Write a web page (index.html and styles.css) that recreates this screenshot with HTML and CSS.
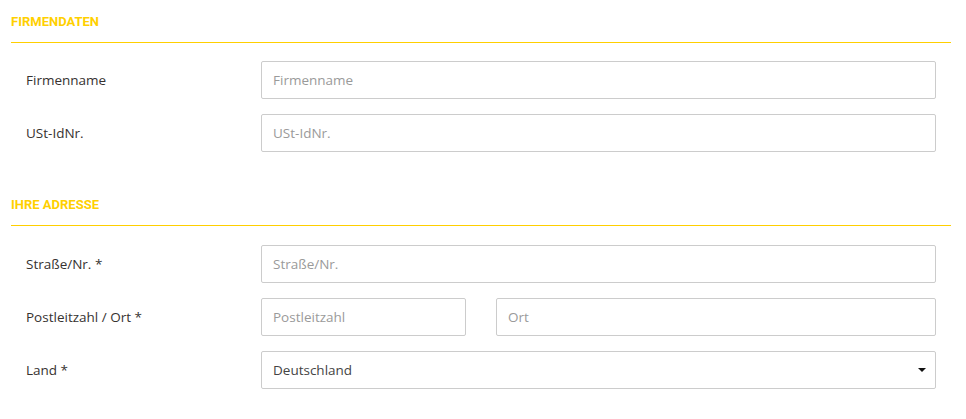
FILE: index.html
```html
<!DOCTYPE html>
<html lang="de">
<head>
<meta charset="utf-8">
<title>Firmendaten</title>
<link rel="stylesheet" href="styles.css">
</head>
<body>
<div class="page">
  <section class="section">
    <h2 class="section-title">FIRMENDATEN</h2>
    <div class="rows">
      <div class="row">
        <label class="label">Firmenname</label>
        <div class="field"><input class="input" type="text" placeholder="Firmenname"></div>
      </div>
      <div class="row">
        <label class="label">USt-IdNr.</label>
        <div class="field"><input class="input" type="text" placeholder="USt-IdNr."></div>
      </div>
    </div>
  </section>
  <section class="section section-second">
    <h2 class="section-title">IHRE ADRESSE</h2>
    <div class="rows rows-second">
      <div class="row">
        <label class="label">Straße/Nr. *</label>
        <div class="field"><input class="input" type="text" placeholder="Straße/Nr."></div>
      </div>
      <div class="row">
        <label class="label">Postleitzahl / Ort *</label>
        <div class="field split">
          <input class="input" type="text" placeholder="Postleitzahl">
          <input class="input" type="text" placeholder="Ort">
        </div>
      </div>
      <div class="row">
        <label class="label">Land *</label>
        <div class="field select-wrap">
          <select class="input select">
            <option>Deutschland</option>
          </select>
        </div>
      </div>
    </div>
  </section>
</div>
</body>
</html>
```

FILE: styles.css
```css
* { box-sizing: border-box; }

html, body {
  margin: 0;
  padding: 0;
  background: #ffffff;
}

body {
  font-family: "Open Sans", "Noto Sans", sans-serif;
  font-size: 13.5px;
  color: #363230;
}

.page {
  padding: 0 15px 0 11px;
  width: 966px;
}

.section-title {
  margin: 0;
  padding: 12px 0 10px;
  height: 42px;
  line-height: 20px;
  font-family: "Roboto", sans-serif;
  font-size: 13px;
  font-weight: 700;
  color: #ffd000;
}

.rows {
  border-top: 1px solid #ffcf00;
  padding: 18px 15px 0;
  display: flex;
  flex-direction: column;
  gap: 15px;
}

.section-second {
  margin-top: 31px;
}

.rows-second {
  padding-top: 19px;
}

.row {
  display: grid;
  grid-template-columns: 235px 1fr;
  align-items: center;
  height: 38px;
}

.label {
  font-size: 13.5px;
  line-height: 20px;
  color: #363230;
}

.field {
  position: relative;
}

.split {
  display: grid;
  grid-template-columns: 205px 1fr;
  gap: 30px;
}

.input {
  display: block;
  width: 100%;
  height: 38px;
  padding: 0 11px;
  border: 1px solid #cccccc;
  border-radius: 2px;
  background: #ffffff;
  font-family: inherit;
  font-size: 13.5px;
  color: #555555;
  outline: none;
}

.input::placeholder {
  color: #9a9a9a;
}

.select {
  appearance: none;
  -webkit-appearance: none;
  color: #444444;
}

.select-wrap::after {
  content: "";
  position: absolute;
  right: 10px;
  top: 17px;
  border-left: 4px solid transparent;
  border-right: 4px solid transparent;
  border-top: 4px solid #111111;
  pointer-events: none;
}
```
